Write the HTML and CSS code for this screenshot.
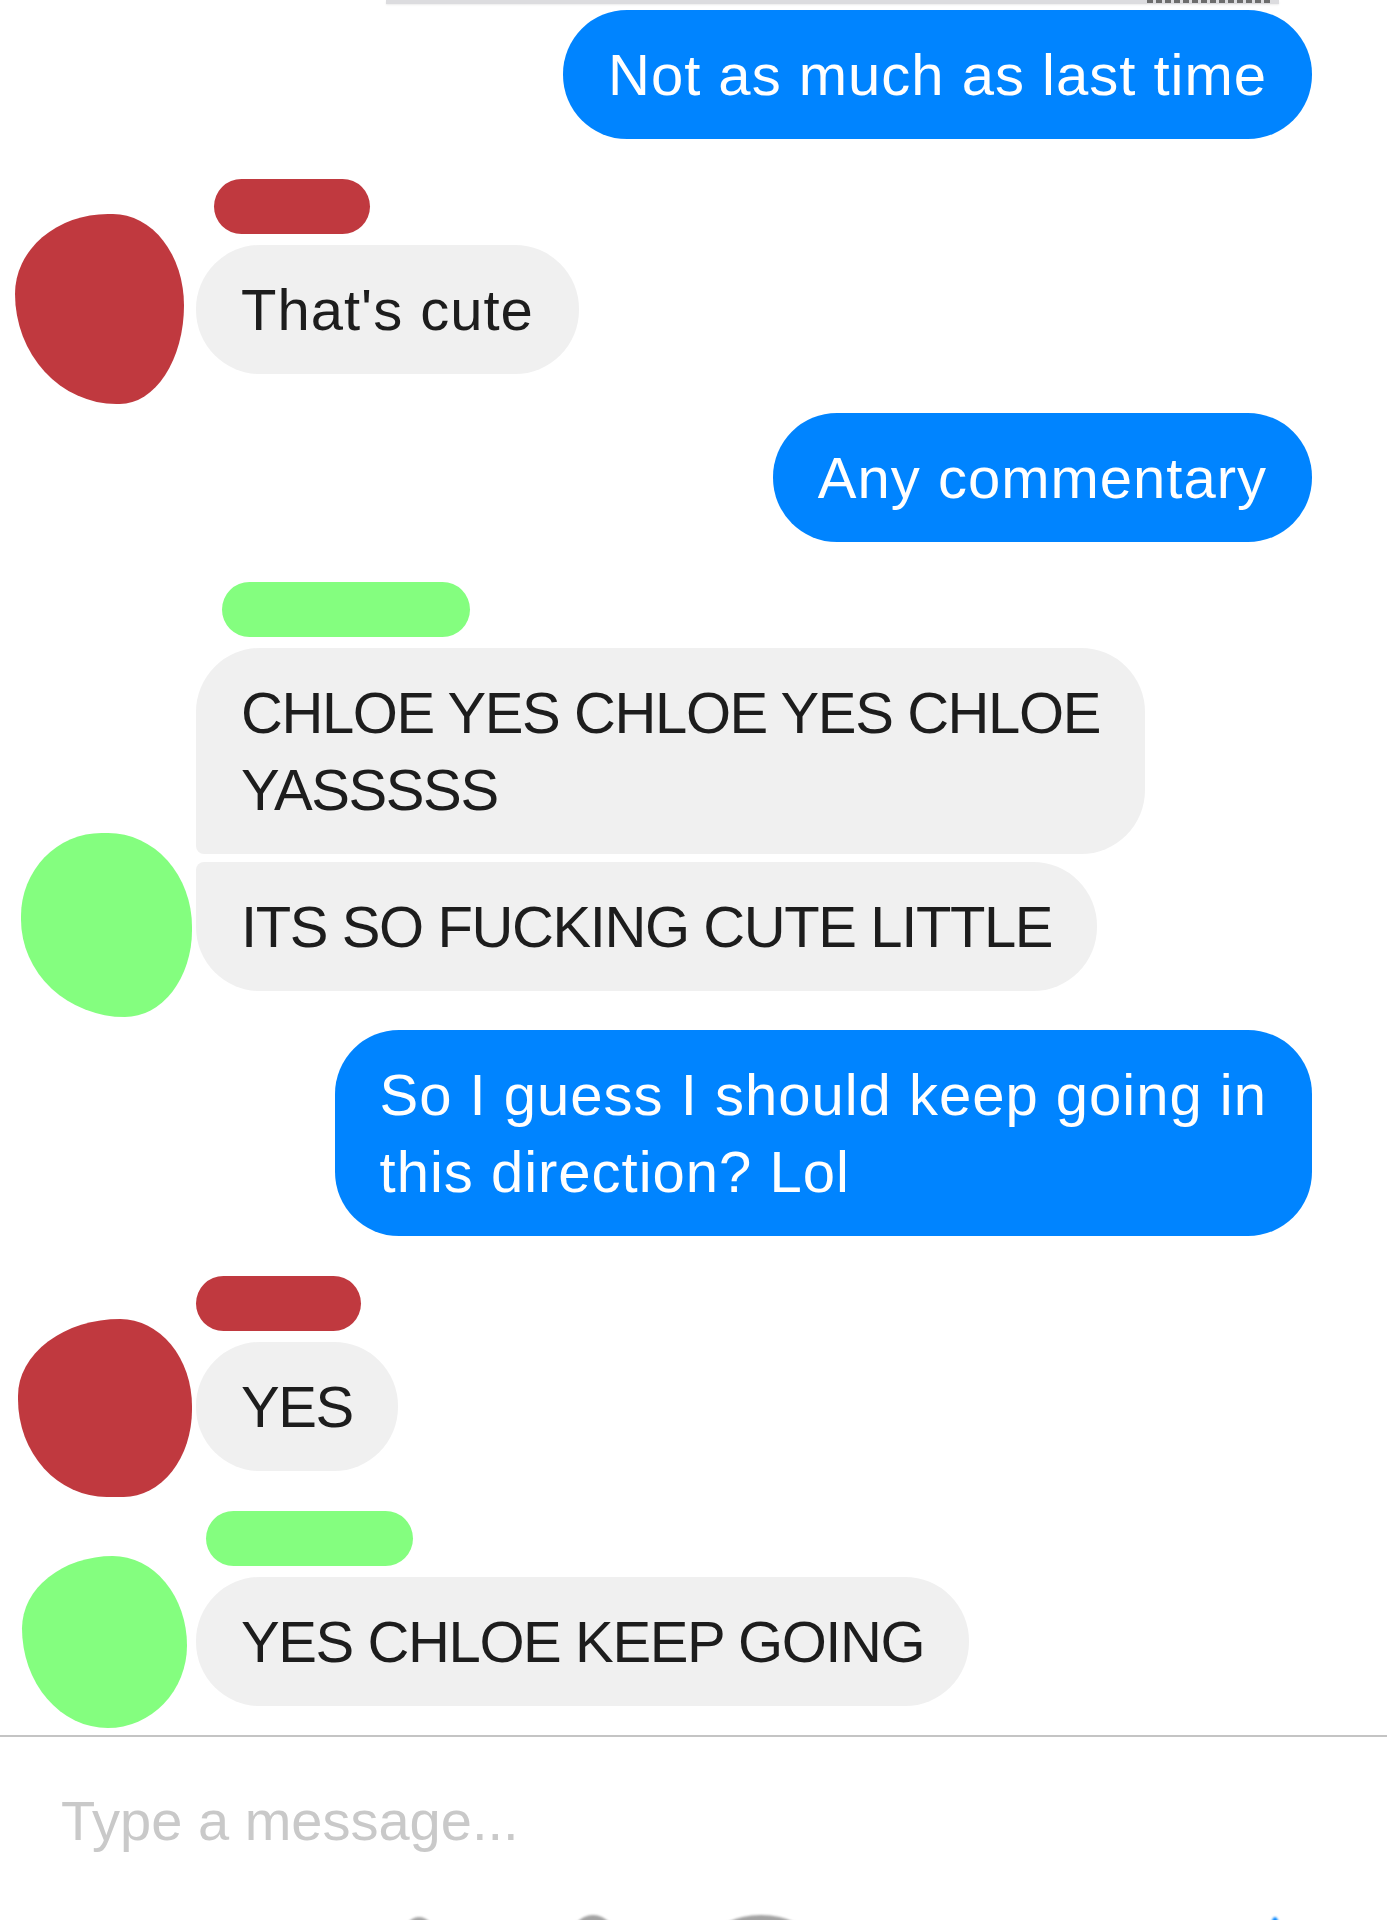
FILE: index.html
```html
<!DOCTYPE html>
<html lang="en">
<head>
    <meta charset="UTF-8">
    <meta name="viewport" content="width=device-width, initial-scale=1.0">
    <title>Messages</title>

    <link rel="stylesheet" href="styles.css">
</head>
<body>

    <div class="chat">
        <!-- bottom edge of the previous shared card -->
        <div class="card-edge"><span class="card-meta"></span></div>

        <div class="out first-out">
            <div class="bubble blue">Not as much as last time</div>
        </div>

        <div class="group">
            <div class="avatar red blob-1"></div>
            <div class="msgs">
                <div class="name red name-1"></div>
                <div class="bubble gray">That's cute</div>
            </div>
        </div>

        <div class="out">
            <div class="bubble blue">Any commentary</div>
        </div>

        <div class="group">
            <div class="avatar green blob-2"></div>
            <div class="msgs">
                <div class="name green name-2"></div>
                <div class="bubble gray caps first">CHLOE YES CHLOE YES CHLOE<br>YASSSSS</div>
                <div class="bubble gray caps last">ITS SO FUCKING CUTE LITTLE</div>
            </div>
        </div>

        <div class="out">
            <div class="bubble blue">So I guess I should keep going in<br>this direction? Lol</div>
        </div>

        <div class="group">
            <div class="avatar red blob-3"></div>
            <div class="msgs">
                <div class="name red name-3"></div>
                <div class="bubble gray caps">YES</div>
            </div>
        </div>

        <div class="group">
            <div class="avatar green blob-4"></div>
            <div class="msgs">
                <div class="name green name-4"></div>
                <div class="bubble gray caps">YES CHLOE KEEP GOING</div>
            </div>
        </div>
    </div>

    <div class="composer">
        <div class="placeholder">Type a message...</div>
        <div class="tools">
            <span class="tool tool-camera"></span>
            <span class="tool tool-gallery"></span>
            <span class="tool tool-sticker"></span>
            <span class="tool tool-like"></span>
        </div>
    </div>

</body>
</html>
```

FILE: styles.css
```css
body {
    margin: 0;
    background-color: #fff;
    font-family: "Liberation Sans", Arial, sans-serif;
    overflow: hidden;
}

.chat {
    display: flex;
    flex-direction: column;
    padding: 0 75px 0 15px;
}

.card-edge {
    position: relative;
    width: 893px;
    height: 4px;
    margin-left: 371px;
    background-color: #dcdcdf;
    box-shadow: 0 1px 2px rgba(0, 0, 0, 0.08);
}

.card-meta {
    position: absolute;
    right: 8px;
    top: 0;
    width: 124px;
    height: 3px;
    background: repeating-linear-gradient(90deg, #6d6d6d 0 6px, transparent 6px 9px);
}

/* outgoing */
.out {
    display: flex;
    justify-content: flex-end;
    margin-top: 39px;
}

.first-out {
    margin-top: 6px;
}

.bubble {
    font-size: 58px;
    line-height: 77px;
    padding: 26px 45px;
    border-radius: 64px;
    white-space: nowrap;
    letter-spacing: 1px;
}

.blue {
    background-color: #0084ff;
    color: #fff;
}

.gray {
    background-color: #f0f0f0;
    color: #1d1d1d;
}

.gray.caps {
    letter-spacing: -1.4px;
}

.gray.first {
    border-bottom-left-radius: 8px;
}

.gray.last {
    border-top-left-radius: 8px;
}

/* incoming */
.group {
    display: flex;
    align-items: flex-end;
    gap: 11px;
    margin-top: 40px;
}

.msgs {
    display: flex;
    flex-direction: column;
    align-items: flex-start;
    gap: 8px;
}

.name {
    height: 55px;
    border-radius: 28px;
    margin-bottom: 3px;
}

.red {
    background-color: #c0393f;
}

.green {
    background-color: #84fe7f;
}

.name-1 { width: 156px; margin-left: 18px; }
.name-2 { width: 248px; margin-left: 26px; }
.name-3 { width: 165px; }
.name-4 { width: 207px; margin-left: 10px; }

.avatar {
    flex: none;
    width: 170px;
    height: 180px;
    margin-bottom: -26px;
}

.blob-1 {
    width: 169px;
    height: 190px;
    margin-right: 1px;
    margin-bottom: -30px;
    border-radius: 55% 42% 38% 60% / 42% 48% 52% 58%;
}

.blob-2 {
    width: 171px;
    height: 184px;
    margin-left: 6px;
    margin-right: -7px;
    border-radius: 48% 50% 40% 62% / 46% 52% 48% 54%;
}

.blob-3 {
    width: 174px;
    height: 178px;
    margin-left: 3px;
    margin-right: -7px;
    border-radius: 60% 42% 40% 52% / 44% 50% 50% 56%;
}

.blob-4 {
    width: 165px;
    height: 172px;
    margin-left: 7px;
    margin-right: -2px;
    margin-bottom: -22px;
    border-radius: 55% 45% 48% 52% / 42% 52% 48% 58%;
}

/* composer */
.composer {
    margin-top: 29px;
    border-top: 2px solid #c4c4c4;
    padding: 51px 0 0 61px;
}

.placeholder {
    font-size: 56px;
    line-height: 66px;
    color: #c9c9c9;
}

.tools {
    display: flex;
    align-items: flex-start;
    margin-top: 61px;
}

.tool {
    display: block;
    height: 50px;
    border-radius: 50%;
    background-color: #a3a3a3;
    filter: blur(1px);
}

.tool-camera {
    width: 36px;
    margin-left: 340px;
    margin-top: 2px;
}

.tool-gallery {
    width: 46px;
    margin-left: 133px;
}

.tool-sticker {
    width: 96px;
    margin-left: 97px;
}

.tool-like {
    width: 12px;
    margin-left: 460px;
    margin-top: 2px;
    background-color: #0084ff;
}
```
